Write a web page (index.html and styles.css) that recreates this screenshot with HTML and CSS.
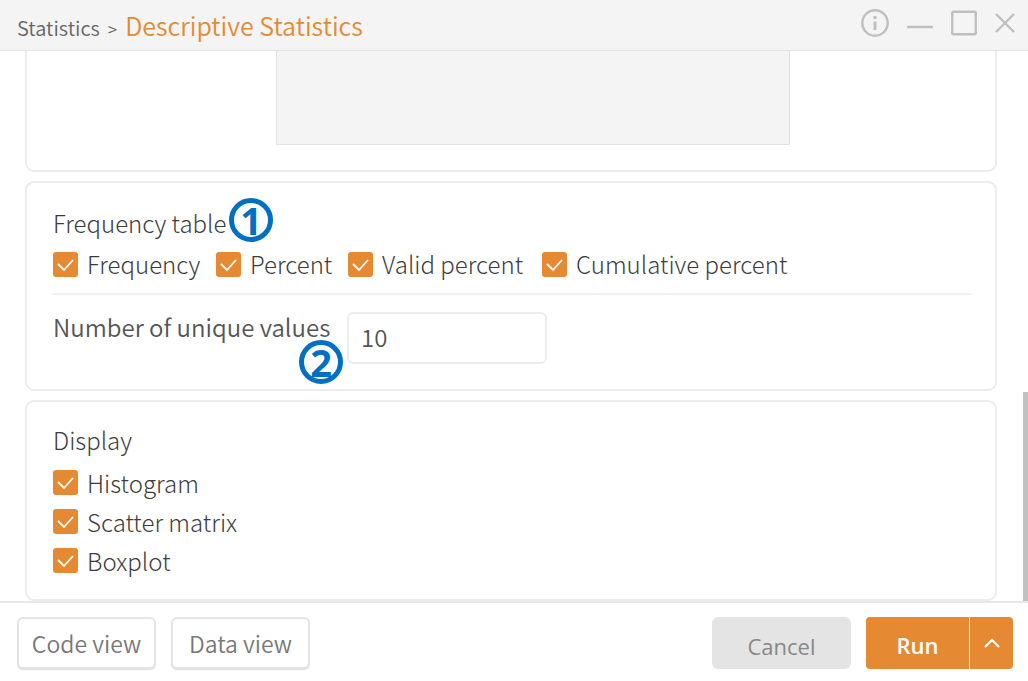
FILE: index.html
```
<!DOCTYPE html>
<html lang="en">
<head>
<meta charset="utf-8">
<title>Descriptive Statistics</title>
<link rel="stylesheet" href="styles.css">
</head>
<body>
<div class="window">
  <header class="titlebar">
    <div class="crumbs"><span>Statistics</span><span class="sep">&gt;</span><h1>Descriptive Statistics</h1></div>
    <div class="window-tools">
      <button type="button" aria-label="Information"><svg width="28" height="28" viewBox="0 0 28 28"><circle cx="14" cy="14" r="12.7"/><path class="info" d="M14 12.5V21M14 7v3"/></svg></button>
      <button type="button" aria-label="Minimize"><svg width="26" height="28" viewBox="0 0 26 28"><path d="M0 18h26"/></svg></button>
      <button type="button" aria-label="Maximize"><svg width="26" height="28" viewBox="0 0 26 28"><rect x="1.2" y="2.7" width="23.6" height="22.6" rx="1.5"/></svg></button>
      <button type="button" aria-label="Close"><svg width="20" height="28" viewBox="0 0 20 28"><path d="M1 5l18 18M19 5L1 23"/></svg></button>
    </div>
  </header>

  <main class="body">
    <div class="panels">
      <section class="card card-clipped"><div class="listbox"></div></section>

      <section class="card">
        <h2><span class="anchor">Frequency table<span class="badge badge-after">1</span></span></h2>
        <div class="check-row">
          <label class="check"><span class="box"><input type="checkbox" checked><svg viewBox="0 0 25 25"><path d="M5 12l6 6L20 8"/></svg></span>Frequency</label>
          <label class="check"><span class="box"><input type="checkbox" checked><svg viewBox="0 0 25 25"><path d="M5 12l6 6L20 8"/></svg></span>Percent</label>
          <label class="check"><span class="box"><input type="checkbox" checked><svg viewBox="0 0 25 25"><path d="M5 12l6 6L20 8"/></svg></span>Valid percent</label>
          <label class="check"><span class="box"><input type="checkbox" checked><svg viewBox="0 0 25 25"><path d="M5 12l6 6L20 8"/></svg></span>Cumulative percent</label>
        </div>
        <div class="field">
          <label for="unique">Number of unique values<span class="badge badge-below">2</span></label>
          <input id="unique" type="text" value="10">
        </div>
      </section>

      <section class="card card-display">
        <h2>Display</h2>
        <div class="check-list">
          <label class="check"><span class="box"><input type="checkbox" checked><svg viewBox="0 0 25 25"><path d="M5 12l6 6L20 8"/></svg></span>Histogram</label>
          <label class="check"><span class="box"><input type="checkbox" checked><svg viewBox="0 0 25 25"><path d="M5 12l6 6L20 8"/></svg></span>Scatter matrix</label>
          <label class="check"><span class="box"><input type="checkbox" checked><svg viewBox="0 0 25 25"><path d="M5 12l6 6L20 8"/></svg></span>Boxplot</label>
        </div>
      </section>
    </div>
    <div class="track"><div class="thumb"></div></div>
  </main>

  <footer class="footer">
    <button type="button" class="btn">Code view</button>
    <button type="button" class="btn">Data view</button>
    <button type="button" class="btn btn-cancel">Cancel</button>
    <div class="split">
      <button type="button" class="run">Run</button>
      <button type="button" class="more" aria-label="More run options"><svg width="16" height="10" viewBox="0 0 16 10"><path d="M1 9l7-7 7 7"/></svg></button>
    </div>
  </footer>
</div>
</body>
</html>
```
FILE: styles.css
```
* { box-sizing: border-box; }
body {
  margin: 0;
  background: #fff;
  color: #555;
  font-family: "Noto Sans CJK KR", "Noto Sans", sans-serif;
  font-size: 24px;
  font-weight: 350;
  line-height: 32px;
}
button, input { font: inherit; color: inherit; margin: 0; }
button { padding: 0; border: 0; background: none; }
h1, h2 { margin: 0; font-weight: inherit; font-size: 24px; }
h2, .check { font-weight: 300; color: #3c3c3c; }
svg { fill: none; stroke: currentColor; display: block; }

.window { display: flex; flex-direction: column; height: 100vh; }

.titlebar {
  display: flex;
  justify-content: space-between;
  flex: none;
  height: 51px;
  padding: 0 13px 0 17px;
  background: #f4f4f4;
  border-bottom: 1px solid #e2e2e2;
}
.crumbs { display: flex; align-items: baseline; gap: 8px; padding-top: 9px; font-size: 20px; color: #666; }
.sep { font-size: 17px; }
.crumbs h1 { font-size: 25px; color: #e58a32; }
.window-tools { display: flex; gap: 18px; padding-top: 9px; color: #bfbfbf; align-items: flex-start; }
.window-tools svg { stroke-width: 2.4; }
.window-tools .info { stroke-width: 3; }

.body { flex: 1; min-height: 0; display: flex; overflow: hidden; }
.panels { flex: 1; display: flex; flex-direction: column; gap: 9px; padding: 0 26px 0 25px; }
.track { width: 5px; display: flex; flex-direction: column; justify-content: flex-end; }
.thumb { height: 38%; background: #c1c1c1; }

.card { border: 2px solid #ececec; border-radius: 9px; padding: 24px 24px 25px 26px; }
.card-clipped { border-top: 0; border-radius: 0 0 9px 9px; padding-top: 0; }
.listbox { width: 56%; height: 94px; margin-left: 223px; background: #f4f4f4; border: 1px solid #e2e2e2; border-top: 0; }
.card-display { padding-top: 22px; padding-bottom: 19px; }

.check { display: flex; align-items: center; gap: 9px; white-space: nowrap; }
.box { display: grid; flex: none; width: 25px; height: 25px; }
.box > * { grid-area: 1 / 1; }
.box input { appearance: none; width: 25px; height: 25px; border-radius: 3px; background: #e58a32; }
.box svg { width: 25px; height: 25px; color: #fff; stroke-width: 1.8; pointer-events: none; }
.check-row { display: grid; grid-template-columns: 163px 132px 194px auto; margin-top: 9px; padding-bottom: 13px; border-bottom: 2px solid #f1f1f1; }
.check-list { display: grid; grid-auto-rows: 39px; margin-top: 7px; }

.field { display: flex; align-items: flex-start; margin-top: 17px; }
.field label { position: relative; width: 294px; line-height: 30px; }
.field input { width: 200px; height: 52px; padding: 0 12px 4px; border: 2px solid #ececec; border-radius: 6px; background: #fff; }

.anchor { position: relative; }
.badge {
  position: absolute;
  display: grid;
  place-items: center;
  width: 44px;
  height: 44px;
  border: 5px solid #0070c5;
  border-radius: 50%;
  color: #0070c5;
  font-family: "Open Sans", sans-serif;
  font-size: 38px;
  font-weight: 700;
  line-height: 32px;
}
.badge-after { left: 176px; top: -7px; }
.badge-below { left: 246px; top: 28px; }

.footer { flex: none; display: flex; gap: 15px; height: 80px; padding: 14px 15px 0 17px; border-top: 2px solid #e8e8e8; }
.btn { width: 139px; height: 52px; border: 2px solid #e4e4e4; border-radius: 6px; color: #777; background: #fff; box-shadow: 0 1px 1px #ddd; font-size: 23px; }
.btn-cancel { margin-left: auto; background: #e4e4e4; box-shadow: none; font-family: "Open Sans", sans-serif; font-size: 22px; font-weight: 400; padding-top: 6px; color: #888; }
.split { display: flex; gap: 1px; height: 52px; color: #fff; border-radius: 4px; overflow: hidden; }
.split button { background: #e58a32; }
.run { width: 103px; font-family: "Open Sans", sans-serif; font-size: 22px; font-weight: 600; padding-top: 4px; }
.more { display: grid; place-items: center; width: 43px; }
.more svg { stroke-width: 2.2; }
```
